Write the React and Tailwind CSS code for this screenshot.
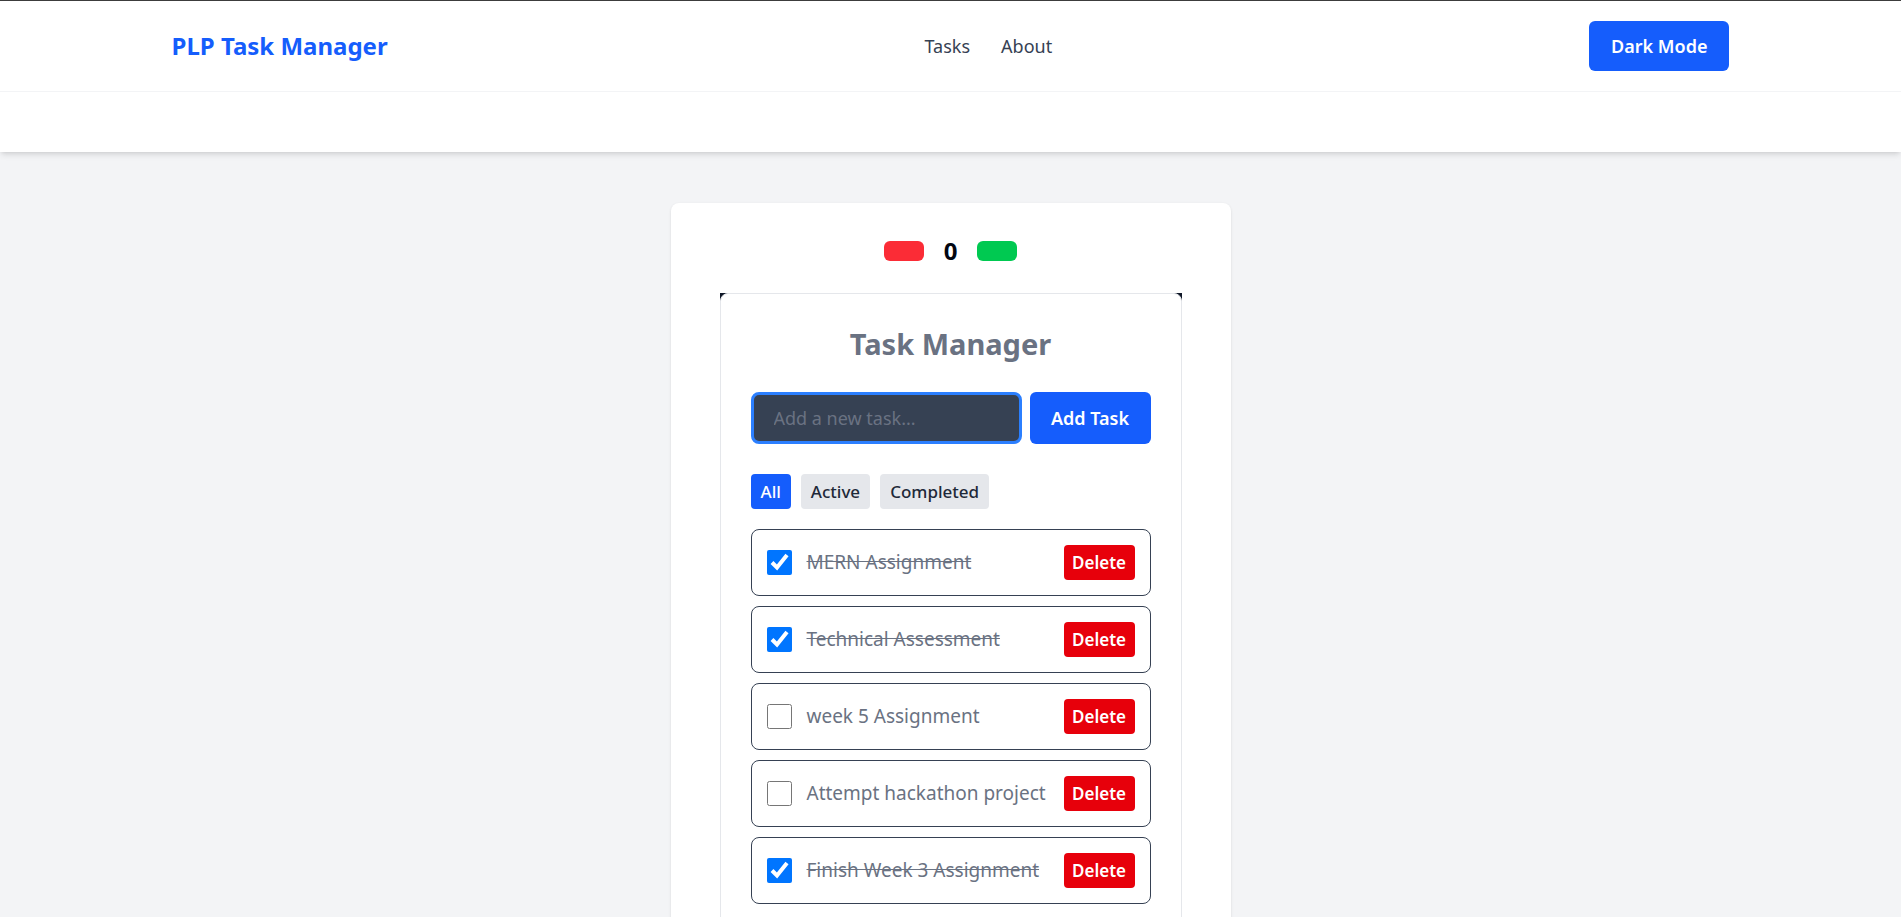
import React, { useState } from "react";

const initialTasks = [
  { id: 1, text: "MERN Assignment", done: true },
  { id: 2, text: "Technical Assessment", done: true },
  { id: 3, text: "week 5 Assignment", done: false },
  { id: 4, text: "Attempt hackathon project", done: false },
  { id: 5, text: "Finish Week 3 Assignment", done: true },
];

const TaskItem = ({ task, onToggle, onDelete }) => (
  <li className="flex items-center gap-[15px] rounded-lg border border-gray-700 px-[15px] py-[15px]">
    <input
      type="checkbox"
      checked={task.done}
      onChange={() => onToggle(task.id)}
      className="m-0 h-[25px] w-[25px] shrink-0"
    />
    <span
      className={`min-w-0 flex-1 whitespace-nowrap text-[19px] text-gray-500 ${
        task.done ? "line-through" : ""
      }`}
    >
      {task.text}
    </span>
    <button
      onClick={() => onDelete(task.id)}
      className="h-[35px] w-[71px] shrink-0 rounded bg-red-600 text-[17px] font-semibold text-white"
    >
      Delete
    </button>
  </li>
);

export default function App() {
  const [tasks, setTasks] = useState(initialTasks);
  const [filter, setFilter] = useState("All");
  const [input, setInput] = useState("");
  const [count, setCount] = useState(0);

  const toggle = (id) =>
    setTasks(tasks.map((t) => (t.id === id ? { ...t, done: !t.done } : t)));
  const remove = (id) => setTasks(tasks.filter((t) => t.id !== id));
  const add = () => {
    if (!input.trim()) return;
    setTasks([...tasks, { id: Date.now(), text: input.trim(), done: false }]);
    setInput("");
  };

  const visible = tasks.filter((t) =>
    filter === "Active" ? !t.done : filter === "Completed" ? t.done : true
  );

  return (
    <div className="min-h-screen bg-gray-100 font-['Noto_Sans',sans-serif]">
      {/* Header */}
      <header className="border-t border-[#3c3c3c] bg-white shadow-md">
        <nav className="border-b border-gray-100">
          <div className="mx-auto flex max-w-[1590px] items-center justify-between px-4 py-5">
            <span className="text-2xl font-bold text-blue-600">PLP Task Manager</span>
            <div className="flex items-center gap-[31px] text-lg text-gray-700">
              <a href="#">Tasks</a>
              <a href="#">About</a>
            </div>
            <button className="rounded-md bg-blue-600 px-[22px] py-3 text-lg font-semibold leading-[26px] text-white">
              Dark Mode
            </button>
          </div>
        </nav>
        <div className="h-[60px]" />
      </header>

      {/* Main */}
      <main className="flex justify-center pt-[51px]">
        <div className="w-[560px] rounded-lg bg-white px-[49px] pt-8 pb-10 shadow-sm">
          {/* Counter */}
          <div className="mb-6.5 flex items-center justify-center gap-5">
            <button
              onClick={() => setCount(count - 1)}
              className="h-5 w-10 rounded-md bg-red-500"
            />
            <span className="text-2xl font-bold leading-8 text-gray-950">{count}</span>
            <button
              onClick={() => setCount(count + 1)}
              className="h-5 w-10 rounded-md bg-green-500"
            />
          </div>

          {/* Task manager */}
          <div className="bg-gray-900">
            <div className="rounded-lg border border-gray-200 bg-white px-[30px] pt-8 pb-8">
              <h2 className="mb-[30px] text-center text-[29px] font-bold leading-9 text-gray-500">
                Task Manager
              </h2>

              <div className="mb-7.5 flex gap-2">
                <input
                  value={input}
                  onChange={(e) => setInput(e.target.value)}
                  onKeyDown={(e) => e.key === "Enter" && add()}
                  placeholder="Add a new task..."
                  className="h-[52px] min-w-0 flex-1 rounded-lg border-[3px] border-blue-500 bg-gray-700 px-5 text-lg text-white outline-none placeholder:text-gray-500"
                />
                <button
                  onClick={add}
                  className="h-[52px] w-[121px] shrink-0 rounded-md bg-blue-600 text-lg font-semibold text-white"
                >
                  Add Task
                </button>
              </div>

              <div className="mb-5 flex gap-2.5">
                {["All", "Active", "Completed"].map((f) => (
                  <button
                    key={f}
                    onClick={() => setFilter(f)}
                    className={`h-[35px] rounded px-2.5 text-[17px] font-medium ${
                      filter === f ? "bg-blue-600 text-white" : "bg-gray-200 text-gray-800"
                    }`}
                  >
                    {f}
                  </button>
                ))}
              </div>

              <ul className="flex flex-col gap-2.5">
                {visible.map((t) => (
                  <TaskItem key={t.id} task={t} onToggle={toggle} onDelete={remove} />
                ))}
              </ul>
            </div>
          </div>
        </div>
      </main>
    </div>
  );
}
